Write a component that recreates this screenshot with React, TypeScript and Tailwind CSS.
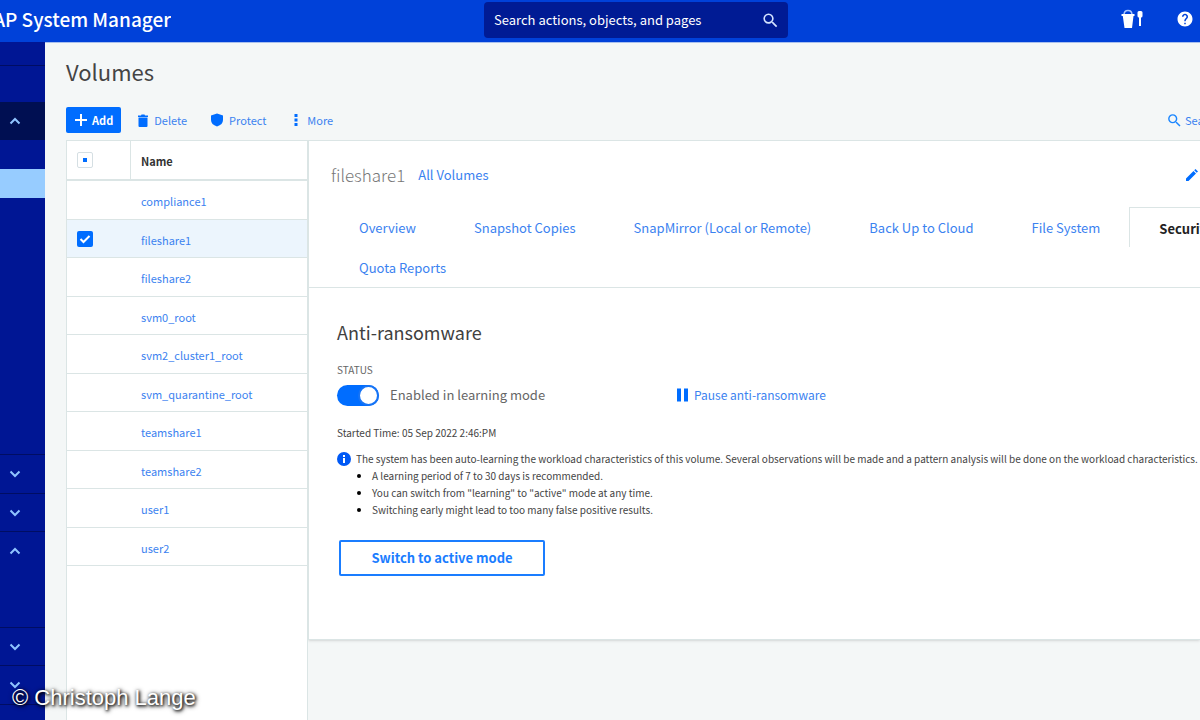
import { useState } from "react";
import { MdSearch, MdHelp } from "react-icons/md";

const sideRows = [
  { size: "h-6", chevron: "", look: "border-b border-[#000d63]" },
  { size: "h-9", chevron: "", look: "" },
  { size: "h-[38px]", chevron: "up", look: "bg-[#000f52]" },
  { size: "h-[29px]", chevron: "", look: "" },
  { size: "h-[29px]", chevron: "", look: "bg-[#97ccff]" },
  { size: "h-[256px]", chevron: "", look: "" },
  { size: "h-[39px]", chevron: "down", look: "border-t border-[#000d63]" },
  { size: "h-[38px]", chevron: "down", look: "border-t border-[#000d63]" },
  { size: "h-[39px]", chevron: "up", look: "border-t border-[#000d63]" },
  { size: "h-[57px]", chevron: "", look: "" },
  { size: "h-[38px]", chevron: "down", look: "border-t border-[#000d63]" },
  { size: "h-[39px]", chevron: "down", look: "border-t border-[#000d63]" },
  { size: "h-[38px]", chevron: "", look: "border-t border-[#000d63]" },
];

const volumes = [
  "compliance1",
  "fileshare1",
  "fileshare2",
  "svm0_root",
  "svm2_cluster1_root",
  "svm_quarantine_root",
  "teamshare1",
  "teamshare2",
  "user1",
  "user2",
];

const tabs = [
  "Overview",
  "Snapshot Copies",
  "SnapMirror (Local or Remote)",
  "Back Up to Cloud",
  "File System",
  "Security",
  "Quota Reports",
];

function Chevron({ dir }: { dir: string }) {
  return (
    <svg width="12" height="8" viewBox="0 0 12 8" fill="none" stroke="#8fc4ff" strokeWidth="2">
      <path d={dir === "up" ? "M1.5 6.5 6 2l4.5 4.5" : "M1.5 1.5 6 6l4.5-4.5"} />
    </svg>
  );
}

function Header() {
  return (
    <header className="flex h-[42px] shrink-0 items-start bg-[#0041d9] text-white">
      <div className="w-[484px] shrink-0">
        <div className="flex h-[38px] w-[171px] items-center justify-end overflow-hidden whitespace-nowrap text-[19px] leading-6 font-medium">
          ONTAP System Manager
        </div>
      </div>
      <div className="mt-[2px] flex h-9 w-[304px] shrink-0 items-center rounded-sm bg-[#001b94] pr-2">
        <input
          type="text"
          aria-label="Search"
          placeholder="Search actions, objects, and pages"
          className="h-9 min-w-0 flex-1 bg-transparent pb-[2px] pl-[10px] text-[13px] text-white placeholder:text-white outline-none"
        />
        <button aria-label="Run search">
          <MdSearch size={19} className="text-[#d5e4ff]" />
        </button>
      </div>
      <div className="ml-auto flex h-[38px] shrink-0 items-center gap-8 pr-[6px]">
        <button aria-label="Sandbox">
          <svg width="23" height="20" viewBox="0 0 23 20" fill="white">
            <path d="M3 6C3 0 11 0 11 6" fill="none" stroke="#a9c6ff" strokeWidth="1.5" />
            <path d="M.5 5h13v2h-1L11 19H3.500L1.800 7H.5z" />
            <path d="M16.500 3.500Q16.500 2 18 2h2q1.500 0 1.500 1.500V7q0 1.500-1.500 1.500V17h-2V8.500q-1.500 0-1.500-1.500z" />
          </svg>
        </button>
        <button aria-label="Help">
          <MdHelp size={18} />
        </button>
      </div>
    </header>
  );
}

function Sidebar() {
  return (
    <nav className="flex w-[45px] shrink-0 flex-col overflow-hidden bg-[#001694]">
      {sideRows.map((row, i) => (
        <div key={i} className={`flex shrink-0 items-center pl-[9px] ${row.size} ${row.look}`}>
          {row.chevron && (
            <button aria-label="Toggle section">
              <Chevron dir={row.chevron} />
            </button>
          )}
        </div>
      ))}
    </nav>
  );
}

function Toolbar() {
  return (
    <div className="mt-[22px] flex h-[26px] items-center whitespace-nowrap text-[11px] leading-4 text-[#3b82f0]">
      <button className="flex h-[26px] items-center gap-1 rounded-xs bg-[#006dff] px-2 font-bold text-white">
        <svg width="14" height="14" viewBox="0 0 14 14" stroke="white" strokeWidth="2">
          <path d="M7 1v12M1 7h12" />
        </svg>
        Add
      </button>
      <button className="ml-[17px] flex items-center gap-[6px]">
        <svg width="10" height="13" viewBox="0 0 10 13" fill="#006dff">
          <path d="M0 1.500h3L3.500.5h3l.5 1h3V3H0zM.5 3.500h9V12q0 1-1 1h-7q-1 0-1-1z" />
        </svg>
        Delete
      </button>
      <button className="ml-6 flex items-center gap-[6px]">
        <svg width="12" height="14" viewBox="0 0 12 14" fill="#006dff">
          <path d="M6 .5 12 2.500V7q0 4.500-6 6.500Q0 11.500 0 7V2.500z" />
        </svg>
        Protect
      </button>
      <button className="ml-7 flex items-center gap-[9px]">
        <svg width="4" height="14" viewBox="0 0 4 14" fill="#006dff">
          <path d="M.5 1h3v3h-3zM.5 5.500h3v3h-3zM.5 10h3v3h-3z" />
        </svg>
        More
      </button>
      <button className="ml-auto flex w-[34px] items-center gap-[2px] overflow-hidden">
        <MdSearch size={17} className="shrink-0 text-[#1a86ff]" />
        Search
      </button>
    </div>
  );
}

function VolumeTable({ selected, onSelect }: { selected: string; onSelect: (name: string) => void }) {
  return (
    <div className="w-[242px] shrink-0 border-x border-t border-[#dbe5e5] bg-white">
      <table className="w-full table-fixed border-separate border-spacing-0 text-left text-[11px] leading-4">
        <thead>
          <tr className="h-10">
            <th className="w-16 border-b-2 border-r border-[#dbe5e5] pl-[10px]">
              <label className="flex size-4 items-center justify-center rounded-xs border border-[#d5dfe3]">
                <input type="checkbox" aria-label="Select all" className="size-1 appearance-none bg-[#006dff]" />
              </label>
            </th>
            <th className="border-b-2 border-[#dbe5e5] pl-[10px] pt-[2px] font-bold text-[#333]">Name</th>
          </tr>
        </thead>
        <tbody>
          {volumes.map((name) => (
            <tr key={name} className={`odd:h-[39px] even:h-[38px] ${name === selected ? "bg-[#ecf5fd]" : ""}`}>
              <td className="border-b border-[#dbe5e5] pl-[10px]">
                {name === selected && (
                  <span className="relative block size-4">
                    <input
                      type="checkbox"
                      checked
                      readOnly
                      aria-label={name}
                      className="block size-4 appearance-none rounded-xs bg-[#006dff]"
                    />
                    <svg className="pointer-events-none absolute inset-0" width="16" height="16" viewBox="0 0 16 16" fill="none" stroke="white" strokeWidth="2">
                      <path d="m3.500 8 3 3 6-6" />
                    </svg>
                  </span>
                )}
              </td>
              <td className="border-b border-[#dbe5e5] pl-[10px] pt-[2px]">
                <a
                  href="#"
                  className="text-[#3b82f0]"
                  onClick={(e) => {
                    e.preventDefault();
                    onSelect(name);
                  }}
                >
                  {name}
                </a>
              </td>
            </tr>
          ))}
        </tbody>
      </table>
    </div>
  );
}

function AntiRansomware() {
  const [enabled, setEnabled] = useState(true);

  return (
    <section className="h-[351px] pl-7 pt-8 text-[#444]">
      <h3 className="text-[18px] leading-6 text-[#404040]">Anti-ransomware</h3>
      <div className="mt-5 text-[10px] leading-3 text-[#666]">STATUS</div>
      <div className="mt-[7px] flex h-6 items-center whitespace-nowrap">
        <label className="flex w-[340px] items-center gap-[11px] text-[13px] text-[#666]">
          <input
            type="checkbox"
            checked={enabled}
            onChange={() => setEnabled(!enabled)}
            className="relative h-[21px] w-[42px] appearance-none rounded-full bg-[#c5ced6] checked:bg-[#006dff] after:absolute after:left-0 after:top-0 after:size-[21px] after:rounded-full after:border-2 after:border-[#1774f5] after:bg-white checked:after:left-[21px]"
          />
          Enabled in learning mode
        </label>
        <button className="flex items-center gap-[6px] text-[12px] text-[#3b82f0]">
          <svg width="11" height="14" viewBox="0 0 11 14" fill="#006dff">
            <path d="M0 .5h4v13H0zM7 .5h4v13H7z" />
          </svg>
          Pause anti-ransomware
        </button>
      </div>
      <div className="mt-[18px] text-[10px] leading-4">Started Time: 05 Sep 2022 2:46:PM</div>
      <div className="mt-[9px] flex items-center gap-[5px] whitespace-nowrap text-[10px] leading-[17px]">
        <svg width="14" height="14" viewBox="0 0 14 14" className="shrink-0">
          <circle cx="7" cy="7" r="7" fill="#0059f5" />
          <path d="M6 3h2v2H6zM6 6h2v5H6z" fill="white" />
        </svg>
        The system has been auto-learning the workload characteristics of this volume. Several observations will be made and a
        pattern analysis will be done on the workload characteristics.
      </div>
      <ul className="list-disc pl-[35px] text-[10px] leading-[17px] marker:text-black">
        <li>A learning period of 7 to 30 days is recommended.</li>
        <li>You can switch from "learning" to "active" mode at any time.</li>
        <li>Switching early might lead to too many false positive results.</li>
      </ul>
      <button className="ml-[2px] mt-[22px] h-9 w-[206px] rounded-xs border-2 border-[#1a7dff] text-[13px] font-bold text-[#1a7dff]">
        Switch to active mode
      </button>
    </section>
  );
}

function VolumeDetail({ name }: { name: string }) {
  const [activeTab, setActiveTab] = useState("Security");

  return (
    <div className="min-w-0 flex-1 overflow-hidden">
      <div className="border-y border-l border-[#dbe5e5] bg-white shadow-sm">
        <div className="flex h-[66px] items-center gap-[13px] pl-[22px] pr-[2px] pt-[2px]">
          <h2 className="text-[17px] leading-6 font-light text-[#777]">{name}</h2>
          <a href="#" className="text-[13px] leading-5 text-[#3b82f0]">
            All Volumes
          </a>
          <button aria-label="Edit" className="ml-auto">
            <svg width="12" height="12" viewBox="0 0 12 12" fill="#006dff">
              <path d="M0 9.500 7.500 2 10 4.500 2.500 12H0zM8.200 1.300 9.500 0 12 2.500l-1.300 1.300z" />
            </svg>
          </button>
        </div>
        <div className="border-b border-[#dbe5e5]">
          <div role="tablist" className="flex w-[940px] flex-wrap pl-[21px] text-[13px] leading-5">
            {tabs.map((tab) => (
              <button
                key={tab}
                role="tab"
                aria-selected={tab === activeTab}
                onClick={() => setActiveTab(tab)}
                className={`h-10 px-[29px] pt-[2px] whitespace-nowrap ${
                  tab === activeTab ? "border-l border-t border-[#dbe5e5] font-bold text-[#222]" : "text-[#3b82f0]"
                }`}
              >
                {tab}
              </button>
            ))}
          </div>
        </div>
        <AntiRansomware />
      </div>
    </div>
  );
}

export default function App() {
  const [selected, setSelected] = useState("fileshare1");

  return (
    <div className="relative flex h-screen flex-col overflow-hidden bg-[#f4f7f7] font-['Noto_Sans_CJK_SC','Noto_Sans',sans-serif]">
      <Header />
      <div className="flex min-h-0 flex-1">
        <Sidebar />
        <main className="flex min-w-0 flex-1 flex-col border-t border-[#a9c0ee] pl-[21px]">
          <h1 className="mt-[14px] text-[22px] leading-7 text-[#444]">Volumes</h1>
          <Toolbar />
          <div className="mt-[7px] flex min-h-0 flex-1">
            <VolumeTable selected={selected} onSelect={setSelected} />
            <VolumeDetail name={selected} />
          </div>
        </main>
      </div>
      <div className="absolute bottom-2 left-3 font-['Liberation_Sans',sans-serif] text-[22px] leading-7 text-white [text-shadow:1px_1px_3px_#000,1px_1px_5px_#000]">
        © Christoph Lange
      </div>
    </div>
  );
}
